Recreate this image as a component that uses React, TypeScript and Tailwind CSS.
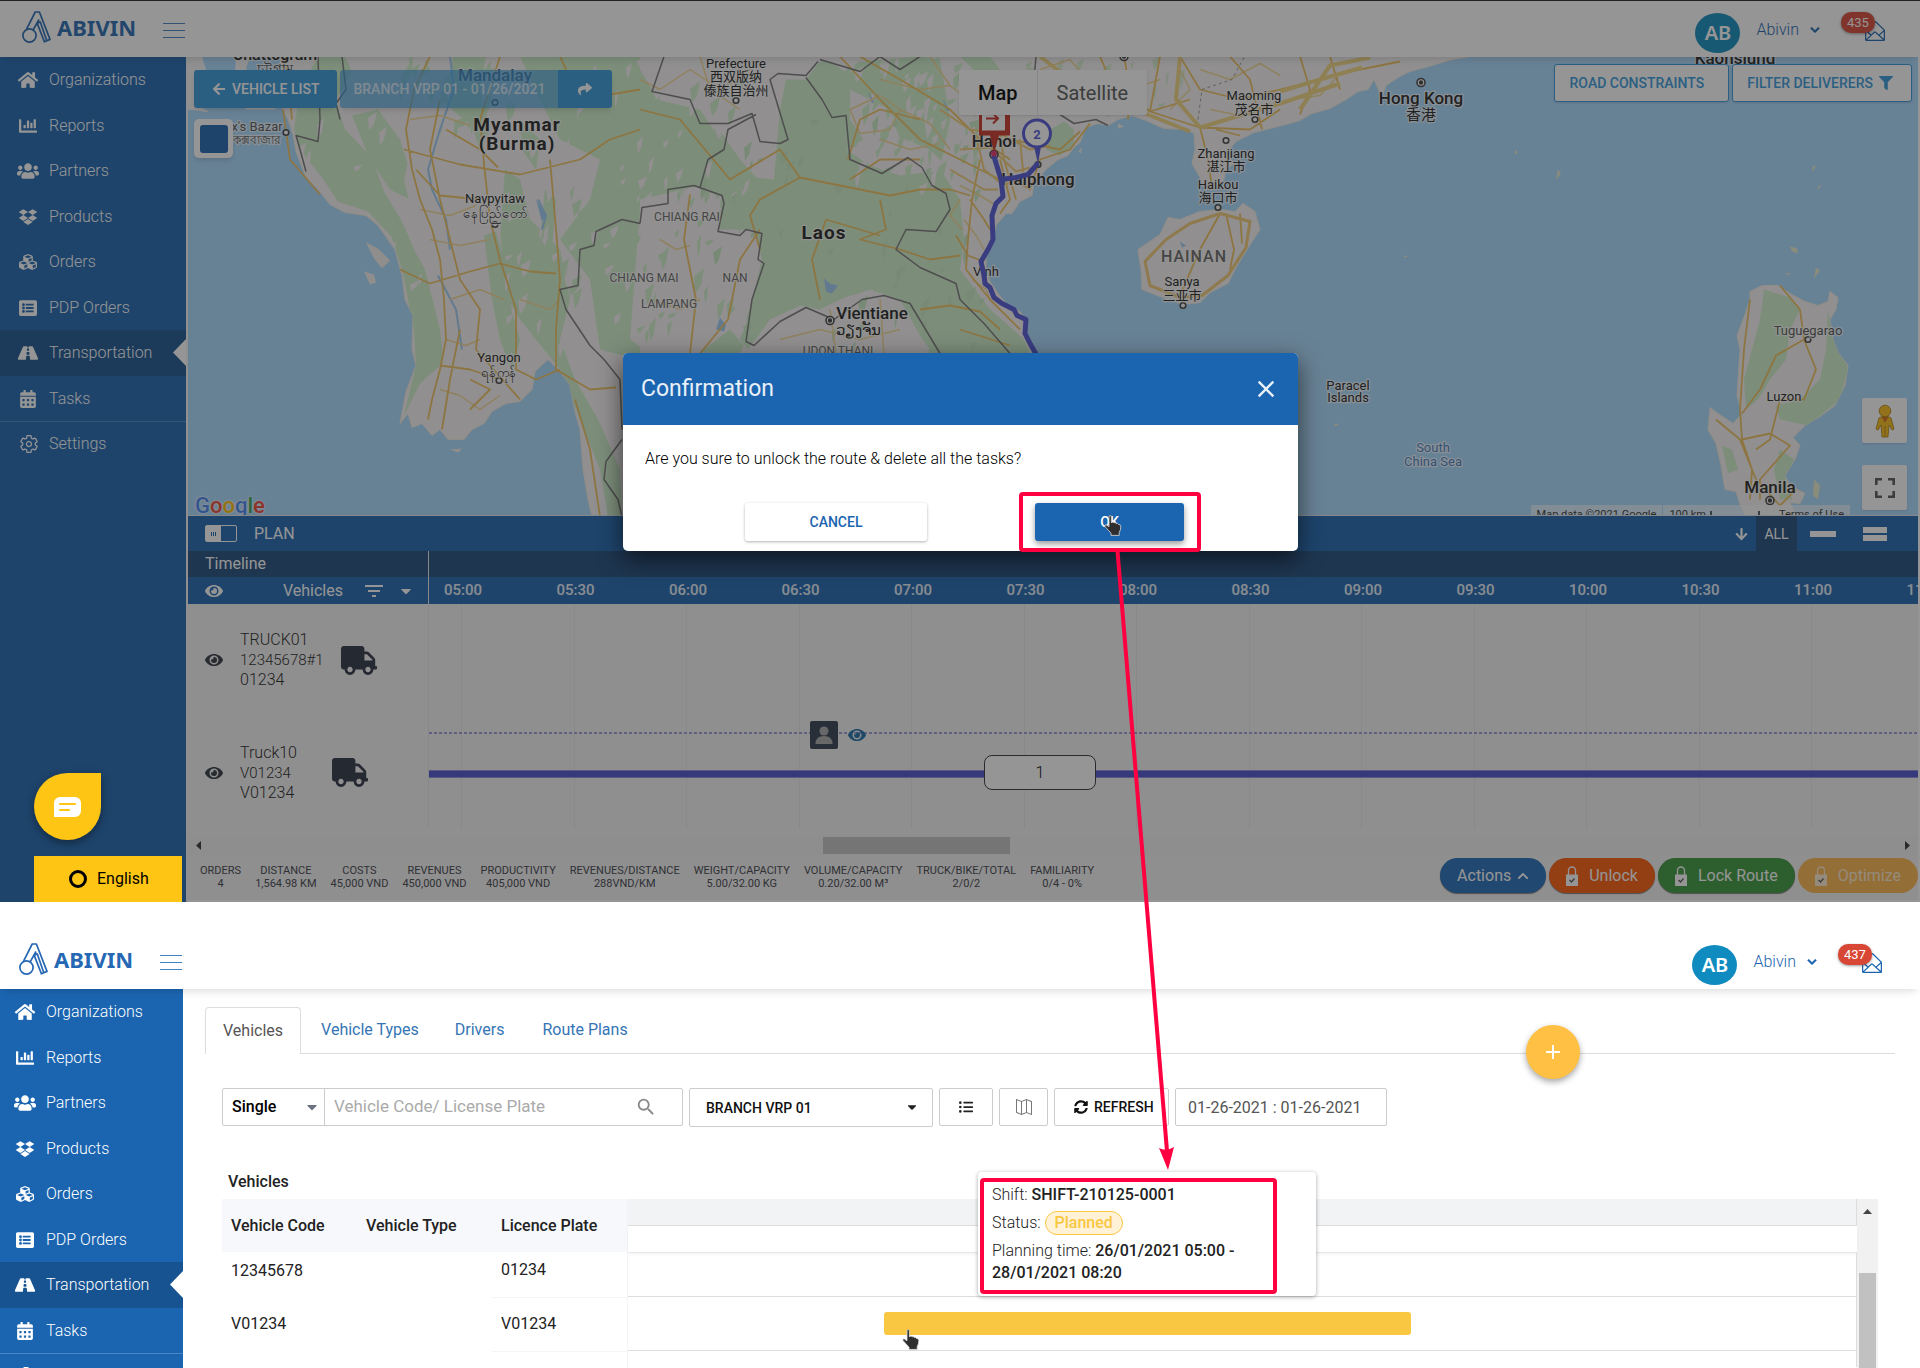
import React from "react";
import {
  FaArrowDown,
  FaArrowLeft,
  FaCalendarAlt,
  FaCaretDown,
  FaChartBar,
  FaChevronDown,
  FaChevronUp,
  FaCubes,
  FaDropbox,
  FaEye,
  FaFilter,
  FaHome,
  FaListAlt,
  FaListUl,
  FaRoad,
  FaShare,
  FaSyncAlt,
  FaTruck,
  FaUsers,
} from "react-icons/fa";
import { MdAdd, MdClose, MdFilterList, MdSearch } from "react-icons/md";
import { IoSettingsOutline } from "react-icons/io5";
import { SlEnvelopeOpen, SlMap } from "react-icons/sl";

const NAV = [
  { label: "Organizations", icon: FaHome },
  { label: "Reports", icon: FaChartBar },
  { label: "Partners", icon: FaUsers },
  { label: "Products", icon: FaDropbox },
  { label: "Orders", icon: FaCubes },
  { label: "PDP Orders", icon: FaListAlt },
  { label: "Transportation", icon: FaRoad },
  { label: "Tasks", icon: FaCalendarAlt },
];

function Logo() {
  return (
    <a href="#home" className="flex items-center gap-1.5 pb-1 text-[#2668b3]" aria-label="Abivin home">
      <svg viewBox="0 0 29 32" className="h-8 w-[29px]" fill="none" stroke="currentColor" strokeWidth="1.7" strokeLinejoin="round">
        <circle cx="7.5" cy="24.5" r="6.6" />
        <path d="M4.6 18.2 13.2 1h4.2L28 28.4l-5.6 2.4-7.2-18.4" />
        <path d="M17 8.5 11 19.2M15.2 12.4l3-1.6 6.6 19" />
      </svg>
      <span className="font-['Noto_Sans'] text-[22px] leading-8 font-bold">ABIVIN</span>
    </a>
  );
}

function Header({ count, inset }: { count: string; inset: string }) {
  return (
    <header className={`relative z-10 flex h-14 shrink-0 items-center bg-white shadow-[0_6px_8px_-4px_rgba(0,0,0,0.14)] ${inset}`}>
      <Logo />
      <button aria-label="Toggle menu" className="mt-[3px] ml-[27px] flex w-[22px] flex-col gap-1.5">
        <span className="h-px bg-[#3f81c3]" />
        <span className="h-px bg-[#3f81c3]" />
        <span className="h-px bg-[#3f81c3]" />
      </button>
      <div className="ml-auto flex items-center">
        <div className="mt-2 flex h-10 w-[45px] items-center justify-center rounded-[50%] bg-[#0f8bbf] font-['Noto_Sans'] text-xl font-semibold text-white">
          AB
        </div>
        <button className="mt-0.5 ml-4 flex items-center gap-[11px] text-base font-light text-[#1b65b0]">
          Abivin <FaChevronDown className="size-2.5" stroke="currentColor" strokeWidth="30" />
        </button>
        <button aria-label={`${count} messages`} className="relative mt-1 ml-[45px] text-[#1b65b0]">
          <SlEnvelopeOpen className="size-5" />
          <span className="absolute -top-[9px] -left-6 rounded-[10px] bg-[#d84635] px-1.5 text-[13px] leading-[21px] text-white shadow-[0_1px_3px_rgba(0,0,0,0.4)]">
            {count}
          </span>
        </button>
      </div>
    </header>
  );
}

function Sidebar({ wide }: { wide?: boolean }) {
  return (
    <nav className={`shrink-0 bg-[#1b65b0] text-base font-light text-white ${wide ? "w-[186px]" : "w-[183px]"}`}>
      <ul className="grid h-[365px] grid-rows-8 border-b border-[#4a86c4]">
        {NAV.map(({ label, icon: Icon }) => (
          <li key={label} className={label === "Transportation" ? "relative bg-[#185391]" : "relative"}>
            <a href={"#" + label} className={`flex h-full items-center gap-2.5 pt-px ${wide ? "pl-[17px]" : "pl-3.5"}`}>
              <Icon className="h-[18px] w-[22px]" />
              {label}
            </a>
            {label === "Transportation" && (
              <svg viewBox="0 0 13 27" className="absolute top-[9px] right-0 h-[27px] w-[13px]">
                <path d="M13 0v27L0 13.5z" fill="#fff" />
              </svg>
            )}
          </li>
        ))}
      </ul>
      <a href="#Settings" className={`flex h-11 items-center gap-2.5 ${wide ? "pl-[19px]" : "pl-4"}`}>
        <IoSettingsOutline className="h-5 w-5" />
        Settings
      </a>
    </nav>
  );
}

/* ---------- Map ---------- */

const COAST =
  "M280 57 283 110 288 120 293 135 296 152 306 178 318 190 330 205 345 213 366 216 378 226 395 250 402 276 405 300 413 316 412 350 416 366 406 392 400 424 408 414 412 428 422 424 432 436 440 430 448 440 464 440 472 430 484 424 492 412 506 404 520 402 532 390 535 372 548 360 560 372 570 386 575 412 580 430 583 470 588 500 592 517 1090 517 1062 400 1036 360 1026 340 1028 322 1020 312 1008 306 998 294 990 282 986 270 986 258 991 248 993 238 996 226 1006 214 1012 214 1020 202 1032 196 1034 184 1046 170 1058 160 1068 156 1074 148 1080 143 1086 128 1098 124 1108 126 1118 120 1132 116 1146 121 1164 129 1186 130 1194 134 1195 150 1192 164 1200 178 1205 190 1214 190 1224 180 1226 170 1234 164 1226 154 1236 142 1254 133 1282 126 1300 121 1312 114 1330 109 1346 100 1358 92 1368 90 1374 80 1382 98 1386 86 1398 78 1410 72 1432 66 1452 60 1470 57z";
const HAINAN =
  "M1138 250 1160 235 1168 218 1180 220 1200 212 1220 210 1235 212 1243 204 1255 212 1260 230 1247 250 1235 270 1228 284 1210 293 1200 303 1183 305 1160 297 1142 290 1141 270z";
const LUZON =
  "M1750 292 1762 286 1778 286 1790 294 1805 302 1818 306 1828 302 1830 292 1838 298 1836 310 1830 320 1833 340 1838 353 1848 366 1845 386 1835 406 1820 417 1805 426 1793 438 1800 446 1795 460 1785 476 1790 486 1805 494 1800 504 1790 503 1796 517 1746 517 1740 505 1736 492 1725 490 1721 466 1716 444 1708 430 1710 408 1718 414 1733 424 1742 414 1737 396 1740 350 1737 336 1745 315 1750 300z";

const FOREST = [
  "M318 57 345 57 352 72 336 100 345 130 372 158 384 192 402 222 414 250 436 290 446 334 440 366 420 384 404 416 416 366 414 330 403 274 392 238 368 212 338 202 322 178 300 150 294 130 300 90z",
  "M352 116 378 110 400 140 412 180 410 200 390 190 370 160z",
  "M452 57 486 57 480 90 490 130 476 156 464 120 440 100z",
  "M505 170 520 180 530 220 560 250 570 300 560 340 575 380 598 420 620 470 622 517 608 517 600 470 580 420 560 370 520 320 508 300 500 240z",
  "M476 240 500 250 508 290 515 330 506 370 498 330 482 290z",
  "M640 57 520 57 540 100 560 140 600 160 590 200 560 240 590 280 600 350 640 360z",
  "M640 70 652 90 700 110 712 120 740 160 756 178 774 180 780 110 786 80 806 80 820 62 832 62 844 72 860 62 920 57 940 60 950 120 940 170 960 200 964 240 960 270 990 310 1004 322 1024 340 1030 354 930 354 900 300 870 290 840 300 820 310 800 306 770 320 748 350 740 340 752 300 762 260 755 230 720 230 716 196 700 186 640 200z",
  "M700 353 730 330 744 346 740 354z",
  "M1050 130 1064 122 1074 130 1074 146 1060 156 1046 150z",
  "M960 57 990 57 1000 70 980 76z",
  "M1764 290 1790 298 1800 310 1790 330 1786 360 1770 380 1758 400 1746 410 1744 380 1752 350 1760 320z",
  "M1828 310 1833 340 1848 368 1840 400 1808 426 1780 420 1776 406 1800 400 1820 380 1826 350z",
  "M1722 446 1732 450 1738 470 1728 474z",
  "M1780 450 1794 460 1786 480 1792 500 1780 500 1774 470z",
];

const PLAINS = [
  "M420 110 450 130 470 120 486 170 500 230 506 300 520 350 530 380 500 400 450 420 440 330 420 250 404 180z",
  "M640 57 690 57 730 100 720 140 700 110 656 100z",
  "M690 190 706 188 722 210 712 240 690 300 680 250z",
  "M640 210 656 240 660 300 650 354 630 340z",
  "M846 150 880 130 930 150 950 170 900 176 870 166z",
  "M850 90 890 110 900 140 870 150 850 120z",
  "M820 310 850 296 896 304 930 350 760 354 800 330z",
];

const SHAN = [
  "M545 190 556 200 552 250 540 240z",
  "M520 120 540 140 536 170 522 150z",
  "M590 100 612 120 606 150 592 130z",
  "M484 236 496 232 504 260 508 300 520 340 512 372 500 340 492 300z",
];

const BORDERS = [
  "M342 57 346 90 336 104 340 120M318 57 320 120 318 142 296 136 300 150 306 172",
  "M640 224 622 220 596 232 594 246 580 250 578 286 560 290 566 310 590 346 604 360 620 380 622 430",
  "M622 440 606 462 604 480 618 500 622 517",
  "M664 57 652 92 690 100 700 124 728 124 752 114 760 142 780 144 788 140 770 80 778 74 806 76 818 62",
  "M806 78 822 100 832 118 846 116 850 160 882 174 908 158 922 168 932 186 946 194 950 210 936 232 906 230 896 250 920 268 956 284 960 300 984 324 1010 354",
  "M820 60 860 72 880 57 900 70 920 57",
  "M640 224 642 208 668 204 668 190 694 186 722 196 724 204 718 232 740 236 746 230 762 234 758 260 764 264 752 300 746 342 754 346 780 322 806 308 834 320 862 300 884 296 910 304 940 354",
  "M700 188 708 160 724 150 728 130 756 115",
  "M1060 115 1074 124 1096 120 1108 126",
  "M1036 57 1034 80 1044 84",
];

const ROADS = [
  "M430 57 414 90 406 130 412 170 420 200 432 230 440 260 444 300 446 340 440 370 432 400 428 420",
  "M500 57 480 120 484 164 490 220 500 260 516 310 516 370 536 380 560 370",
  "M440 100 430 150 440 200 460 280 480 310 476 350 520 400",
  "M404 150 460 165 520 175 580 160 610 140 640 130",
  "M550 160 556 230 560 280 556 330 556 370 590 390 616 388",
  "M400 270 430 284 470 272 500 264 530 272 556 274",
  "M416 170 440 196 480 200M446 130 480 150 498 168",
  "M440 366 470 370 500 380M460 330 450 380 442 430M470 380 490 390 470 410",
  "M283 110 290 160 320 195M575 400 590 450 600 517",
  "M285 57 290 100 292 120M560 57 580 100 640 90",
  "M640 110 680 120 730 180 780 150 800 178 760 200 750 216 760 250",
  "M800 178 860 190 890 196 920 190 950 190 970 196",
  "M880 200 886 230 860 240 900 250 930 260 960 256",
  "M690 195 684 240 696 300 690 354M760 230 740 260 728 320 700 354",
  "M820 300 812 260 826 220 880 236",
  "M840 57 880 100 920 140 960 160 1000 180",
  "M860 57 900 80 950 110 980 140 1010 160",
  "M848 160 860 120 880 110 920 120M850 180 880 160 920 160",
  "M920 310 950 306 980 312 1000 330M960 330 1010 346",
  "M980 160 972 200 968 240 966 270 990 300 1020 330",
  "M970 200 984 220 990 230M956 236 968 256 984 262",
  "M1000 160 1010 200 1000 214M1010 140 1060 150 1080 132",
  "M1014 180 1030 190 1040 160 1070 150 1090 124",
  "M1100 57 1110 80 1150 112 1200 128 1250 130 1280 110",
  "M1124 57 1130 90 1128 120M1160 57 1150 112 1190 100",
  "M1200 128 1208 160 1212 188M1180 57 1200 90 1240 100 1280 90",
  "M1230 57 1250 80 1262 130M1216 130 1240 136",
  "M1280 90 1320 80 1360 70 1400 62M1300 57 1310 90 1300 115M1330 57 1340 90",
  "M1220 214 1200 250 1180 296M1226 214 1234 250 1230 270M1240 214 1242 244",
  "M1750 300 1744 350 1740 410 1742 440 1752 470 1750 500M1780 286 1800 310 1804 340 1776 356 1760 390 1742 414",
  "M1804 340 1816 370 1804 400 1780 400 1770 440 1756 450M1742 440 1770 434 1790 446 1760 480 1760 500M1716 420 1740 440 1756 480 1780 506 1796 490",
];

const LANES = [
  "M640 80 660 90 690 70 720 90 750 70M700 57 710 90 740 110",
  "M850 110 880 96 900 110 890 130 860 134zM900 110 930 124 950 150M880 140 910 150 940 144",
  "M880 80 920 90 950 86 980 110 1000 104M930 57 950 86M970 76 990 100 1020 110 1050 104",
  "M1040 70 1070 60 1090 84 1130 90 1160 80M1060 100 1100 96 1120 104M1170 110 1190 90 1180 70",
  "M1210 110 1240 116 1270 104M1200 70 1230 80 1260 64 1280 76M1290 100 1320 96 1340 74",
  "M960 186 980 196 996 206M964 220 976 236 984 250M972 280 986 290 990 300M960 200 950 216 962 230",
  "M410 120 440 116 470 126M420 210 450 216 476 206M430 240 460 246 490 240M450 300 480 290 504 300",
  "M446 340 466 346 480 340M440 390 460 396 480 410 500 396M520 300 550 310 560 300",
  "M780 340 820 330 860 340 900 330M830 310 836 354M880 300 884 354",
  "M660 240 676 250 690 246M650 300 680 310 700 300",
];

const RIVERS = "M450 57 454 90 440 130 428 170 432 190 446 220 450 250M438 276 456 310 462 350M538 200 546 216 542 230";
const LAKES =
  "M824 279 830 284 838 286 832 294 826 292zM720 318 726 326 724 332 716 330zM536 200 546 216 542 222zM868 92 874 102 872 104zM943 100 950 112 946 110zM1180 242 1186 246 1182 248z";

type MapLabel = { x: number; y: number; text: string; size?: number; color?: string; weight?: number; gap?: number };
const LABELS: MapLabel[] = [
  { x: 275, y: 60, text: "Chattogram", size: 16 },
  { x: 275, y: 73, text: "চট্টগ্রাম", size: 13 },
  { x: 257, y: 131, text: "x's Bazar", size: 13, color: "#555" },
  { x: 257, y: 144, text: "কক্সবাজার", size: 12, color: "#555" },
  { x: 495, y: 81, text: "Mandalay", size: 17, color: "#35506b" },
  { x: 517, y: 131, text: "Myanmar", size: 19, weight: 700, gap: 1 },
  { x: 517, y: 150, text: "(Burma)", size: 19, weight: 700, gap: 1 },
  { x: 495, y: 203, text: "Naypyitaw", size: 13 },
  { x: 495, y: 218, text: "နေပြည်တော်", size: 13 },
  { x: 499, y: 362, text: "Yangon", size: 13 },
  { x: 499, y: 377, text: "ရန်ကုန်", size: 13 },
  { x: 687, y: 221, text: "CHIANG RAI", size: 12, color: "#666" },
  { x: 644, y: 282, text: "CHIANG MAI", size: 12, color: "#666" },
  { x: 735, y: 282, text: "NAN", size: 12, color: "#666" },
  { x: 669, y: 308, text: "LAMPANG", size: 12, color: "#666" },
  { x: 838, y: 355, text: "UDON THANI", size: 12, color: "#666" },
  { x: 736, y: 68, text: "Prefecture", size: 13 },
  { x: 736, y: 81, text: "西双版纳", size: 13 },
  { x: 736, y: 95, text: "傣族自治州", size: 13 },
  { x: 824, y: 239, text: "Laos", size: 19, weight: 700, gap: 1 },
  { x: 872, y: 319, text: "Vientiane", size: 17 },
  { x: 858, y: 335, text: "ວຽງຈັນ", size: 15 },
  { x: 994, y: 147, text: "Hanoi", size: 17 },
  { x: 1038, y: 185, text: "Haiphong", size: 17 },
  { x: 986, y: 276, text: "Vinh", size: 13 },
  { x: 1254, y: 100, text: "Maoming", size: 13 },
  { x: 1254, y: 114, text: "茂名市", size: 13 },
  { x: 1226, y: 158, text: "Zhanjiang", size: 13 },
  { x: 1226, y: 171, text: "湛江市", size: 13 },
  { x: 1218, y: 189, text: "Haikou", size: 13 },
  { x: 1218, y: 202, text: "海口市", size: 13 },
  { x: 1194, y: 262, text: "HAINAN", size: 16, color: "#666", weight: 500, gap: 1 },
  { x: 1182, y: 286, text: "Sanya", size: 13 },
  { x: 1182, y: 300, text: "三亚市", size: 13 },
  { x: 1421, y: 104, text: "Hong Kong", size: 17 },
  { x: 1421, y: 120, text: "香港", size: 15 },
  { x: 1735, y: 64, text: "Kaohsiung", size: 17 },
  { x: 1348, y: 390, text: "Paracel", size: 13 },
  { x: 1348, y: 402, text: "Islands", size: 13 },
  { x: 1433, y: 452, text: "South", size: 13, color: "#4a7fc4" },
  { x: 1433, y: 466, text: "China Sea", size: 13, color: "#4a7fc4" },
  { x: 1808, y: 335, text: "Tuguegarao", size: 13, color: "#555" },
  { x: 1784, y: 401, text: "Luzon", size: 13 },
  { x: 1770, y: 493, text: "Manila", size: 17 },
];
const TOWNS = [
  [495, 103], [495, 225], [499, 381], [736, 101], [1038, 165], [1255, 120], [1226, 141], [1218, 208], [1183, 306], [286, 133], [1808, 340],
];
const CAPITALS = [[830, 321], [1421, 83], [1770, 501], [994, 155], [1124, 57]];

/* Small ridges scattered over the highlands, from a fixed seed. */
function ridges(seed: number, n: number, x0: number, y0: number, w: number, h: number) {
  let s = seed;
  const next = () => (s = (s * 16807) % 2147483647) / 2147483647;
  let d = "";
  for (let i = 0; i < n; i++) {
    const x = x0 + next() * w;
    const y = y0 + next() * h;
    const a = 3 + next() * 7;
    const b = 4 + next() * 12;
    d += `M${x.toFixed(0)} ${y.toFixed(0)}l${a.toFixed(0)} ${(-b / 2).toFixed(0)} ${(-a / 3).toFixed(0)} ${b.toFixed(0)} ${(-a / 2).toFixed(0)} ${(b / 2).toFixed(0)}z`;
  }
  return d;
}

function MapCanvas() {
  return (
    <svg viewBox="188 57 1730 459" preserveAspectRatio="xMidYMid slice" className="absolute inset-0 size-full font-['Roboto','Noto_Sans_CJK_SC',sans-serif]">
      <defs>
        <clipPath id="land">
          <path d={COAST} />
          <path d={LUZON} />
        </clipPath>
      </defs>
      <rect x="188" y="57" width="1730" height="459" fill="#aadaff" />
      <path d="M188 57h14l6 20-8 30 10 6-22-3zM236 57h14l-4 12 30 41h-30l-12-20z" fill="#f7f5f7" />
      <path d="M364 272l10 3 2 8-6 2zM366 243l12 6 12 12-8 8-8-10zM450 450l12-1-4 4zM1118 124l6 3-6 2zM1078 152l4-4-1 6z" fill="#f4f2ee" />
      <path d={COAST + HAINAN + LUZON} fill="#f7f4f4" stroke="#f4efe2" strokeWidth="1" />
      <g clipPath="url(#land)">
        <path d={FOREST.join("")} fill="#cff0cb" />
        <path d={PLAINS.join("")} fill="#f7f4f4" />
        <path d={SHAN.join("")} fill="#cff0cb" />
        <path d={ridges(77, 90, 500, 60, 250, 300)} fill="#f7f4f4" />
        <path d={ridges(13, 80, 560, 60, 180, 290)} fill="#cff0cb" />
        <path d={ridges(91, 60, 840, 60, 140, 120)} fill="#cff0cb" />
        <path d={ridges(23, 40, 850, 60, 120, 130)} fill="#f7f4f4" />
        <path d={ridges(41, 24, 296, 60, 160, 230)} fill="#f7f4f4" />
        <path d={ridges(57, 30, 400, 60, 110, 70)} fill="#cff0cb" />
        <path d={ridges(63, 45, 700, 120, 280, 230)} fill="#c8eac4" />
        <path d={ridges(33, 26, 1000, 57, 180, 50)} fill="#d8eed4" />
      </g>
      <path d={LAKES} fill="#9dcbf5" />
      <path d={RIVERS} fill="none" stroke="#9dcbf5" strokeWidth="2" />
      <g fill="none" strokeLinejoin="round">
        <path d={LANES.join("")} stroke="#f4d894" strokeWidth="1.5" />
        <path d={ROADS.join("")} stroke="#f0c25e" strokeWidth="1.8" />
        <path d="M1150 286 1145 262 1166 240 1190 224 1220 214 1250 222 1246 248 1228 276 1202 296 1180 298z" stroke="#f2cb74" strokeWidth="3" />
        <path d="M1040 57 1070 80 1110 100 1150 116 1190 132M1180 57 1176 100 1200 128M1280 92 1320 80 1362 68M1300 110 1330 66 1370 58M1200 128 1280 104 1340 84" stroke="#f3d683" strokeWidth="4" />
        <path d="M940 110 970 130 1000 134 1030 150 1050 146M960 150 990 148 1016 172 1030 168M976 136 984 170 1004 186 1020 178M1000 134 1004 160 1016 200M950 170 984 190 998 190M1020 140 1024 180M1034 140 1040 168" stroke="#f2cb74" strokeWidth="2" />
        <path d={BORDERS.join("")} stroke="#777" strokeWidth="1.5" />
        <path d="M1198 120l4-30 30-10 12-22" stroke="#999" strokeWidth="1" strokeDasharray="3 3" />
      </g>
      <path d="M1515 150l3 3-3 2zM1558 170l3 4-5 6zM1812 168l4-3-3 7zM1818 187l4-2-4 5zM1790 247l7 2 1 5-6-2zM1816 268l4 3-6 8zM1786 274l6-1-6 3zM1404 256l4 1-4 1zM1334 425l6-1-5 3zM1814 480l6 6-2 14-5-4zM1828 490l6 4z" fill="#e8eecd" />
      <g fill="#fff" stroke="#444" strokeWidth="1.6">
        {TOWNS.map(([x, y]) => (
          <circle key={`${x}-${y}`} cx={x} cy={y} r="2.8" />
        ))}
        {CAPITALS.map(([x, y]) => (
          <g key={`${x}-${y}`}>
            <circle cx={x} cy={y} r="4" />
            <circle cx={x} cy={y} r="1.4" fill="#222" />
          </g>
        ))}
      </g>
      <g textAnchor="middle" stroke="#fff" strokeWidth="2.5" strokeOpacity="0.7" paintOrder="stroke" strokeLinejoin="round">
        {LABELS.map((l) => (
          <text key={l.text + l.y} x={l.x} y={l.y} fontSize={l.size} fontWeight={l.weight ?? (l.size && l.size > 15 ? 500 : 400)} fill={l.color ?? "#222"} letterSpacing={l.gap}>
            {l.text}
          </text>
        ))}
      </g>
      <path
        d="M994 157 1001 180 1003 197 996 204 992 216 993 240 988 250 981 262 984 276 985 284 990 288 994 298 1002 304 1014 310 1017 316 1026 320 1025 334 1030 344 1038 358M1001 180 1016 178 1028 175 1037 165"
        fill="none"
        stroke="#4f56d6"
        strokeWidth="5"
        strokeLinejoin="round"
        strokeLinecap="round"
      />
      <g>
        <path d="M973 114h6v22h11l4 18 5-18h11v-22h2l-6-8h-28z" fill="#c93226" />
        <path d="M982 114h23v17h-23z" fill="#fff" />
        <path d="M986 119h12m-5-5 5 5-5 5" fill="none" stroke="#c93226" strokeWidth="2" />
        <circle cx="994" cy="154" r="3" fill="#e0306a" />
      </g>
      <g>
        <path d="M1034 147h7l-3 17z" fill="#4f56d6" />
        <circle cx="1037" cy="134" r="13.5" fill="#fff" stroke="#4f56d6" strokeWidth="3" />
        <text x="1037" y="139" textAnchor="middle" fontSize="13" fontWeight="700" fill="#4f56d6">
          2
        </text>
      </g>
    </svg>
  );
}

function Pegman() {
  return (
    <svg viewBox="0 0 20 34" className="h-[34px] w-5">
      <path d="M4 14q6-4 12 0l3 11-2 1-3-5-1 12H7L6 21l-3 5-2-1z" fill="#fbbd17" stroke="#a87a08" strokeWidth="0.8" />
      <path d="M6.500 13h7L10 19z" fill="#d8701a" />
      <path d="M10 22v10" stroke="#a87a08" strokeWidth="0.8" />
      <circle cx="10" cy="7" r="5.800" fill="#fbbd17" stroke="#a87a08" strokeWidth="0.8" />
    </svg>
  );
}

function MapPanel() {
  return (
    <div className="relative h-[459px] overflow-hidden border-b border-gray-200">
      <MapCanvas />
      <div className="absolute inset-x-0 top-0 flex items-start pt-[13px] pl-1.5 text-sm font-medium text-white">
        <button className="flex h-[38px] items-center gap-1.5 rounded-[3px] bg-[#3498db] px-[18px] shadow-md">
          <FaArrowLeft className="size-3.5" /> VEHICLE LIST
        </button>
        <div className="ml-[3px] flex h-[38px] rounded-[3px] shadow-md">
          <span className="flex items-center rounded-l-[3px] bg-[#3498db]/65 px-[13px] text-white/70">BRANCH VRP 01 - 01/26/2021</span>
          <button aria-label="Share route" className="flex w-[54px] items-center justify-center rounded-r-[3px] bg-[#3498db]">
            <FaShare className="size-3.5" />
          </button>
        </div>
      </div>
      <div className="absolute top-[13px] left-[771px] flex h-[45px] rounded-xs bg-white text-xl shadow-sm">
        <button className="border-r border-gray-200 px-[19px] font-medium text-black">Map</button>
        <button className="px-[19px] text-[#565656]">Satellite</button>
      </div>
      <div className="absolute top-[7px] right-1.5 flex gap-[3px] text-sm font-medium text-[#3498db]">
        <button className="h-[38px] rounded-[3px] border border-[#3498db] bg-white pr-6 pl-[15px] shadow-sm">ROAD CONSTRAINTS</button>
        <button className="flex h-[38px] items-center gap-1.5 rounded-[3px] border border-[#3498db] bg-white pr-[18px] pl-3.5 shadow-sm">
          FILTER DELIVERERS <FaFilter className="size-3.5" />
        </button>
      </div>
      <label className="absolute top-[62px] left-1.5 flex size-[39px] items-center justify-center rounded-[5px] bg-white shadow-md">
        <input type="checkbox" aria-label="Show layer" className="size-7 appearance-none rounded-[3px] bg-[#1b65b0]" />
      </label>
      <a
        href="#google"
        className="absolute top-[435px] left-[7px] text-[22px] leading-7 font-medium text-[#4285f4] [text-shadow:0_0_2px_#fff,0_0_2px_#fff]"
      >
        G<span className="text-[#ea4335]">o</span>
        <span className="text-[#fbbc05]">o</span>g<span className="text-[#34a853]">l</span>
        <span className="text-[#ea4335]">e</span>
      </a>
      <div className="absolute right-[11px] bottom-[5px] flex flex-col gap-[22px]">
        <button aria-label="Street view" className="flex size-[45px] items-center justify-center rounded-xs bg-white shadow-sm">
          <Pegman />
        </button>
        <button aria-label="Full screen" className="flex size-[45px] items-center justify-center rounded-xs bg-white shadow-sm">
          <svg viewBox="0 0 20 20" className="size-5" fill="none" stroke="#555" strokeWidth="2.6">
            <path d="M1.300 7V1.300H7M13 1.300h5.700V7M18.700 13v5.700H13M7 18.700H1.300V13" />
          </svg>
        </button>
      </div>
      <div className="absolute right-[68px] -bottom-2 flex h-[18px] gap-px text-[11px] leading-5 text-[#333]">
        <span className="bg-white/60 px-1.5">Map data ©2021 Google</span>
        <button className="flex gap-1 bg-white/60 px-1.5">
          100 km <span className="mt-1.5 h-2 w-[50px] border-x-2 border-gray-600" />
        </button>
        <a href="#terms" className="bg-white/60 pr-1.5 pl-3">
          Terms of Use
        </a>
      </div>
    </div>
  );
}

/* ---------- Timeline ---------- */

const TIMES = ["05:00", "05:30", "06:00", "06:30", "07:00", "07:30", "08:00", "08:30", "09:00", "09:30", "10:00", "10:30", "11:00", "11:30"];
const TRUCKS = [
  { lines: ["TRUCK01", "12345678#1", "01234"], gap: "gap-[17px]", height: "h-[112px]" },
  { lines: ["Truck10", "V01234", "V01234"], gap: "gap-[35px]", height: "h-[113px]" },
];
const STATS = [
  ["ORDERS", "4"],
  ["DISTANCE", "1,564.98 KM"],
  ["COSTS", "45,000 VND"],
  ["REVENUES", "450,000 VND"],
  ["PRODUCTIVITY", "405,000 VND"],
  ["REVENUES/DISTANCE", "288VND/KM"],
  ["WEIGHT/CAPACITY", "5.00/32.00 KG"],
  ["VOLUME/CAPACITY", "0.20/32.00 M³"],
  ["TRUCK/BIKE/TOTAL", "2/0/2"],
  ["FAMILIARITY", "0/4 - 0%"],
];

function LockIcon() {
  return (
    <svg viewBox="0 0 12 20" className="h-5 w-3">
      <path d="M2.500 9V4.500a3.500 3.500 0 0 1 7 0V9" fill="none" stroke="currentColor" strokeWidth="1.300" />
      <path d="M0 8.500h12V20H0z" fill="currentColor" />
      <path d="m3.500 14 2 2 3-3.500" fill="none" stroke="#555" strokeWidth="1.300" />
    </svg>
  );
}

function Timeline() {
  return (
    <div className="flex flex-col bg-[#f3f3f3]">
      <div className="flex h-[35px] items-center bg-[#1b65b0] text-white">
        <button aria-label="Toggle layout" className="ml-[17px] flex h-[17px] w-8 rounded-xs border border-white">
          <span className="flex w-1/2 items-center justify-center gap-px bg-white">
            <i className="h-1 w-px bg-[#1b65b0]" />
            <i className="h-1 w-px bg-[#1b65b0]" />
            <i className="h-1 w-px bg-[#1b65b0]" />
          </span>
        </button>
        <span className="ml-[17px] text-base">PLAN</span>
        <div className="ml-auto flex h-full items-center">
          <button aria-label="Move down" className="mr-2">
            <FaArrowDown className="h-3.5 w-[13px]" />
          </button>
          <button className="h-full w-[41px] bg-[#1b497b] text-sm">ALL</button>
          <button aria-label="Single row" className="ml-[13px] h-1.5 w-[26px] bg-white" />
          <button aria-label="Double row" className="mr-[31px] ml-[27px] h-3.5 w-6 border-y-6 border-white" />
        </div>
      </div>
      <div className="flex">
        <div className="w-[241px] shrink-0 border-r border-gray-200">
          <div className="flex h-[26px] items-center bg-[#1b497b] pl-[17px] text-base text-white">Timeline</div>
          <div className="flex h-[27px] items-center bg-[#1b65b0] pl-[17px] text-base text-white">
            <FaEye className="size-[18px]" />
            <span className="ml-auto">Vehicles</span>
            <MdFilterList className="ml-[19px] size-6" />
            <FaCaretDown className="mr-3.5 ml-3 size-4" />
          </div>
          {TRUCKS.map((t) => (
            <div key={t.lines[0]} className={`flex items-center pl-[17px] ${t.height}`}>
              <FaEye className="size-[18px] text-[#2f3640]" />
              <div className={`ml-[17px] flex items-center ${t.gap}`}>
                <p className="leading-5 font-light text-[#222]">
                  {t.lines.map((line, i) => (
                    <span key={i} className={i === 1 ? "block text-[15px] leading-5" : "block"}>
                      {line}
                    </span>
                  ))}
                </p>
                <FaTruck className="h-[29px] w-9 text-[#2a3040]" />
              </div>
            </div>
          ))}
        </div>
        <div className="min-w-0 flex-1 overflow-hidden">
          <div className="h-[26px] bg-[#1b497b]" />
          <div className="flex h-[27px] items-center overflow-hidden bg-[#1b65b0] pl-[15px] text-[15px] font-medium text-white/90">
            {TIMES.map((t) => (
              <span key={t} className="w-[112.5px] shrink-0">
                {t}
              </span>
            ))}
          </div>
          <div className="relative h-[225px] overflow-hidden">
            <div className="flex h-full pl-8">
              {TIMES.map((t) => (
                <span key={t} className="w-[112.5px] shrink-0 border-l border-[#e9e9e9]" />
              ))}
            </div>
            <div className="absolute inset-x-0 top-32 h-0.5 bg-[repeating-linear-gradient(90deg,#9a9ad8_0_3px,transparent_3px_5px)]" />
            <div className="absolute inset-x-0 top-[166px] h-2 border-y border-[#8c8cd8] bg-[#4a4fce]" />
            <div className="absolute top-[117px] left-[381px] flex items-center gap-2.5">
              <svg viewBox="0 0 28 28" className="size-7">
                <rect width="28" height="28" rx="2" fill="#2f3c4e" />
                <circle cx="14" cy="10" r="4.500" fill="#aaa" />
                <path d="M5.500 23q0-8 8.500-8t8.500 8z" fill="#aaa" />
              </svg>
              <FaEye className="size-[18px] text-[#1c6ea8]" />
            </div>
            <button className="absolute top-[151px] left-[555px] h-[35px] w-28 rounded-lg border border-[#333340] bg-white text-base font-light">1</button>
          </div>
        </div>
      </div>
      <div className="mt-[7px] flex h-[19px] items-center bg-[#f1f1f1] px-2 text-[#333]">
        <svg viewBox="0 0 5 9" className="h-[9px] w-[5px]">
          <path d="M5 0v9L0 4.500z" fill="currentColor" />
        </svg>
        <span className="ml-[622px] h-[17px] w-[187px] bg-[#c1c1c1]" />
        <svg viewBox="0 0 5 9" className="ml-auto h-[9px] w-[5px]">
          <path d="M0 0v9l5-4.500z" fill="currentColor" />
        </svg>
      </div>
      <div className="flex h-[45px] items-center pb-1 text-white">
        <dl className="flex gap-3.5 pt-0.5 pl-3 text-center text-[11px] leading-[13px] text-[#3c4048]">
          {STATS.map(([k, v]) => (
            <div key={k}>
              <dt>{k}</dt>
              <dd>{v}</dd>
            </div>
          ))}
        </dl>
        <div className="ml-auto flex gap-[3px] text-base">
          <button className="flex h-[35px] items-center gap-1.5 rounded-full bg-[#216bba] px-[17px] shadow-[0_1px_1px_rgba(0,0,0,0.5)]">
            Actions <FaChevronUp className="size-3" />
          </button>
          <button className="flex h-[35px] items-center gap-[11px] rounded-full bg-[#fd5909] px-[17px] shadow-[0_1px_1px_rgba(0,0,0,0.5)]">
            <LockIcon /> Unlock
          </button>
          <button className="flex h-[35px] items-center gap-[11px] rounded-full bg-[#38963a] px-[17px] shadow-[0_1px_1px_rgba(0,0,0,0.5)]">
            <LockIcon /> Lock Route
          </button>
          <button className="flex h-[35px] items-center gap-[11px] rounded-full bg-[#fcb449] px-[17px] text-white/75">
            <LockIcon /> Optimize
          </button>
        </div>
      </div>
      <div className="h-0.5 bg-white" />
    </div>
  );
}

/* ---------- Overlays ---------- */

function HandCursor({ place }: { place: string }) {
  return (
    <svg viewBox="0 0 18 21" className={`absolute h-[21px] w-[18px] ${place}`}>
      <path
        d="M5 1.800Q5 .6 6.200.6t1.200 1.200V8l.6-.8q1.400-.6 2 .6 1.500-.7 2.200.7 1.500-.5 2.200.9 2.400-.2 2.400 2.200 0 3.400-1.600 6v2.800H7v-2.200Q4.500 15.500.9 11.400q-.6-1.600 1.200-1.600L5 11.800z"
        fill="#2e2e2e"
        stroke="#ddd"
        strokeWidth="0.8"
      />
    </svg>
  );
}

function ConfirmDialog() {
  return (
    <div
      role="dialog"
      aria-labelledby="confirm-title"
      className="absolute top-[352px] left-[623px] w-[675px] rounded-[5px] bg-white shadow-[0_8px_24px_rgba(0,0,0,0.6)]"
    >
      <div className="flex h-[72px] items-center justify-between rounded-t-[5px] bg-[#1b65b0] px-[18px] text-[#e8f0f8]">
        <h2 id="confirm-title" className="text-[23px]">
          Confirmation
        </h2>
        <button aria-label="Close">
          <MdClose className="size-7" />
        </button>
      </div>
      <p className="px-[22px] pt-[22px] text-base leading-6 font-light text-black">Are you sure to unlock the route &amp; delete all the tasks?</p>
      <div className="flex pt-8 pb-2.5 pl-[122px] text-sm font-medium">
        <button className="h-[38px] w-[182px] rounded-[3px] text-[#1b65b0] shadow-[0_1px_3px_rgba(0,0,0,0.3)]">CANCEL</button>
        <div className="relative ml-[108px]">
          <button className="h-[38px] w-[149px] rounded-[3px] bg-[#1b65b0] text-white shadow-[0_3px_6px_rgba(0,0,0,0.4)]">OK</button>
          <span className="absolute -top-[11px] -left-4 h-[60px] w-[182px] rounded-[4px] border-[4px] border-[#ff0040]" />
          <HandCursor place="top-3 left-[69px]" />
        </div>
      </div>
    </div>
  );
}

function Widgets() {
  return (
    <div className="absolute bottom-0 left-[34px] flex flex-col gap-4">
      <button aria-label="Chat" className="flex size-[67px] items-center justify-center rounded-full rounded-tr-md bg-[#ffc514] shadow-[0_3px_8px_rgba(0,0,0,0.4)]">
        <svg viewBox="0 0 27 20" className="h-5 w-[27px]">
          <path d="M6 0h15a6 6 0 0 1 6 6v8a6 6 0 0 1-6 6H0V6a6 6 0 0 1 6-6z" fill="#fff" />
          <path d="M6 7h15M6 13h9" stroke="#ffc514" strokeWidth="2.200" strokeLinecap="round" />
        </svg>
      </button>
      <button className="flex h-[46px] w-[148px] items-center gap-2.5 bg-[#ffc514] pl-[35px] text-base text-black">
        <span className="size-[18px] rounded-full border-[3px] border-black" /> English
      </button>
    </div>
  );
}

function PlannerScreen() {
  return (
    <section className="relative shrink-0 border-t border-[#222]">
      <Header count="435" inset="pl-[22px] pr-[35px]" />
      <div className="flex">
        <Sidebar wide />
        <main className="min-w-0 flex-1 border-l-2 border-gray-100 pr-0.5">
          <MapPanel />
          <Timeline />
        </main>
      </div>
      <div className="absolute inset-0 z-10 bg-[rgba(33,33,33,0.48)]" />
      <div className="absolute inset-0 z-20">
        <ConfirmDialog />
        <Widgets />
      </div>
    </section>
  );
}

/* ---------- Vehicles screen ---------- */

const FIELD = "h-[38px] rounded-xs border border-[#ccc]";

function Toolbar() {
  return (
    <form className="flex items-start gap-1.5 pt-[34px] pl-[17px] text-base">
      <div className={`flex ${FIELD}`}>
        <div className="relative flex border-r border-[#ccc]">
          <select aria-label="Search mode" className="w-[101px] appearance-none bg-transparent pl-[9px] font-medium text-black">
            <option>Single</option>
          </select>
          <FaCaretDown className="pointer-events-none absolute top-2.5 right-1 size-4 text-gray-500" />
        </div>
        <input aria-label="Vehicle code or license plate" placeholder="Vehicle Code/ License Plate" className="w-[310px] pl-[9px] text-[17px] placeholder:text-[#aaa]" />
        <button type="button" aria-label="Search" className="w-[47px] text-[#888]">
          <MdSearch className="size-[22px]" />
        </button>
      </div>
      <div className="relative">
        <select aria-label="Branch" className="h-[39px] w-[244px] appearance-none rounded-xs border border-[#ccc] pl-4 text-sm font-medium text-[#111]">
          <option>BRANCH VRP 01</option>
        </select>
        <FaCaretDown className="pointer-events-none absolute top-3 right-3.5 size-3.5 text-[#222]" />
      </div>
      <button type="button" aria-label="List view" className={`flex w-[54px] items-center justify-center ${FIELD}`}>
        <FaListUl className="size-3.5 text-[#222]" />
      </button>
      <button type="button" aria-label="Map view" className={`flex w-[49px] items-center justify-center ${FIELD}`}>
        <SlMap className="size-4 text-[#777]" />
      </button>
      <button type="button" className={`flex w-[115px] items-center gap-1.5 pl-[19px] text-sm font-medium text-[#111] ${FIELD}`}>
        <FaSyncAlt className="size-3.5" /> REFRESH
      </button>
      <input aria-label="Date range" readOnly value="01-26-2021 : 01-26-2021" className={`w-[212px] pl-3 text-[#555] ${FIELD}`} />
    </form>
  );
}

function ShiftTooltip() {
  return (
    <div className="absolute top-[-27px] left-[350px] w-[338px] rounded-[4px] bg-white pt-3 pb-3 pl-3.5 text-base leading-[22px] font-light text-[#222] shadow-[0_1px_4px_rgba(0,0,0,0.35)]">
      <p>
        Shift: <b className="font-medium">SHIFT-210125-0001</b>
      </p>
      <p className="my-[5px]">
        Status: <span className="inline-block rounded-full border border-[#fac743] bg-[#fff2d6] px-[9px] font-medium text-[#fac743]">Planned</span>
      </p>
      <p className="w-[270px]">
        Planning time: <b className="font-medium">26/01/2021 05:00 - 28/01/2021 08:20</b>
      </p>
      <span className="absolute top-1.5 left-0.5 h-[116px] w-[297px] rounded-[4px] border-[4px] border-[#ff0040]" />
    </div>
  );
}

function Schedule() {
  return (
    <div className="ml-[17px] flex flex-1">
      <table className="w-[405px] table-fixed self-start text-left text-base text-[#222]">
        <thead>
          <tr className="h-[53px] bg-[#f7f8fb]">
            <th className="pl-[9px] font-medium">Vehicle Code</th>
            <th className="pl-[9px] font-medium">Vehicle Type</th>
            <th className="pl-[9px] font-medium">Licence Plate</th>
          </tr>
        </thead>
        <tbody>
          <tr className="h-[45px]">
            <td className="pb-2 pl-[9px]">12345678</td>
            <td />
            <td className="border-b border-gray-100 pb-2 pl-[9px]">01234</td>
          </tr>
          <tr className="h-[54px]">
            <td className="pl-[9px]">V01234</td>
            <td />
            <td className="border-b border-gray-100 pl-[9px]">V01234</td>
          </tr>
        </tbody>
      </table>
      <div className="relative min-w-0 flex-1 border-l border-gray-100">
        <div className="h-[27px] border-r border-b border-[#ddd] bg-[#f1f3f5]" />
        <div className="h-[27px] border-b border-gray-200 shadow-[0_2px_3px_rgba(0,0,0,0.04)]" />
        <div className="h-11 border-r border-b border-[#ddd]" />
        <div className="flex h-[54px] items-start border-r border-b border-[#ddd] pt-[15px] pl-64">
          <div className="relative h-[23px] w-[527px] rounded-[3px] bg-[#fac743]">
            <HandCursor place="top-[17px] left-[18px]" />
          </div>
        </div>
        <div className="h-4 border-r border-[#ddd]" />
        <ShiftTooltip />
      </div>
      <div className="mr-[42px] flex w-[21px] flex-col items-center bg-[#f1f1f1] pt-2.5">
        <svg viewBox="0 0 9 5" className="h-[5px] w-[9px]">
          <path d="M0 5h9L4.500 0z" fill="#444" />
        </svg>
        <span className="mt-[59px] w-[17px] flex-1 bg-[#c1c1c1]" />
      </div>
    </div>
  );
}

function VehiclesScreen() {
  return (
    <section className="flex min-h-0 flex-1 flex-col overflow-hidden pt-[31px]">
      <Header count="437" inset="pl-[19px] pr-[38px]" />
      <div className="flex min-h-0 flex-1">
        <Sidebar />
        <main className="flex min-w-0 flex-1 flex-col pt-[18px] pl-[22px]">
          <div className="relative mr-[25px] flex border-b border-[#ddd] text-base leading-[46px] text-[#3575b5]" role="tablist">
            <button role="tab" aria-selected="true" className="-mb-px rounded-t-[4px] border border-b-0 border-[#ddd] bg-white px-[17px] text-[#555]">
              Vehicles
            </button>
            <button role="tab" className="pr-[18px] pl-5">Vehicle Types</button>
            <button role="tab" className="px-[18px]">Drivers</button>
            <button role="tab" className="px-5">Route Plans</button>
            <button
              aria-label="Add vehicle"
              className="absolute top-[18px] right-[315px] flex size-[54px] items-center justify-center rounded-full bg-[#ffc043] text-white shadow-[0_3px_6px_rgba(0,0,0,0.35)]"
            >
              <MdAdd className="size-6" />
            </button>
          </div>
          <Toolbar />
          <h3 className="mt-[43px] mb-[5px] pl-[23px] text-base leading-6 font-medium text-[#222]">Vehicles</h3>
          <Schedule />
        </main>
      </div>
    </section>
  );
}

export default function App() {
  return (
    <div className="relative flex h-screen flex-col overflow-hidden bg-white font-['Roboto',sans-serif]">
      <PlannerScreen />
      <VehiclesScreen />
      <svg viewBox="0 0 70 620" className="absolute top-[551px] left-[1110px] z-30 h-[620px] w-[70px]">
        <path d="M7.500 0 57 600" stroke="#ff0040" strokeWidth="4" />
        <path d="M49 597q7 4 15 -1L58 619z" fill="#ff0040" />
      </svg>
    </div>
  );
}
